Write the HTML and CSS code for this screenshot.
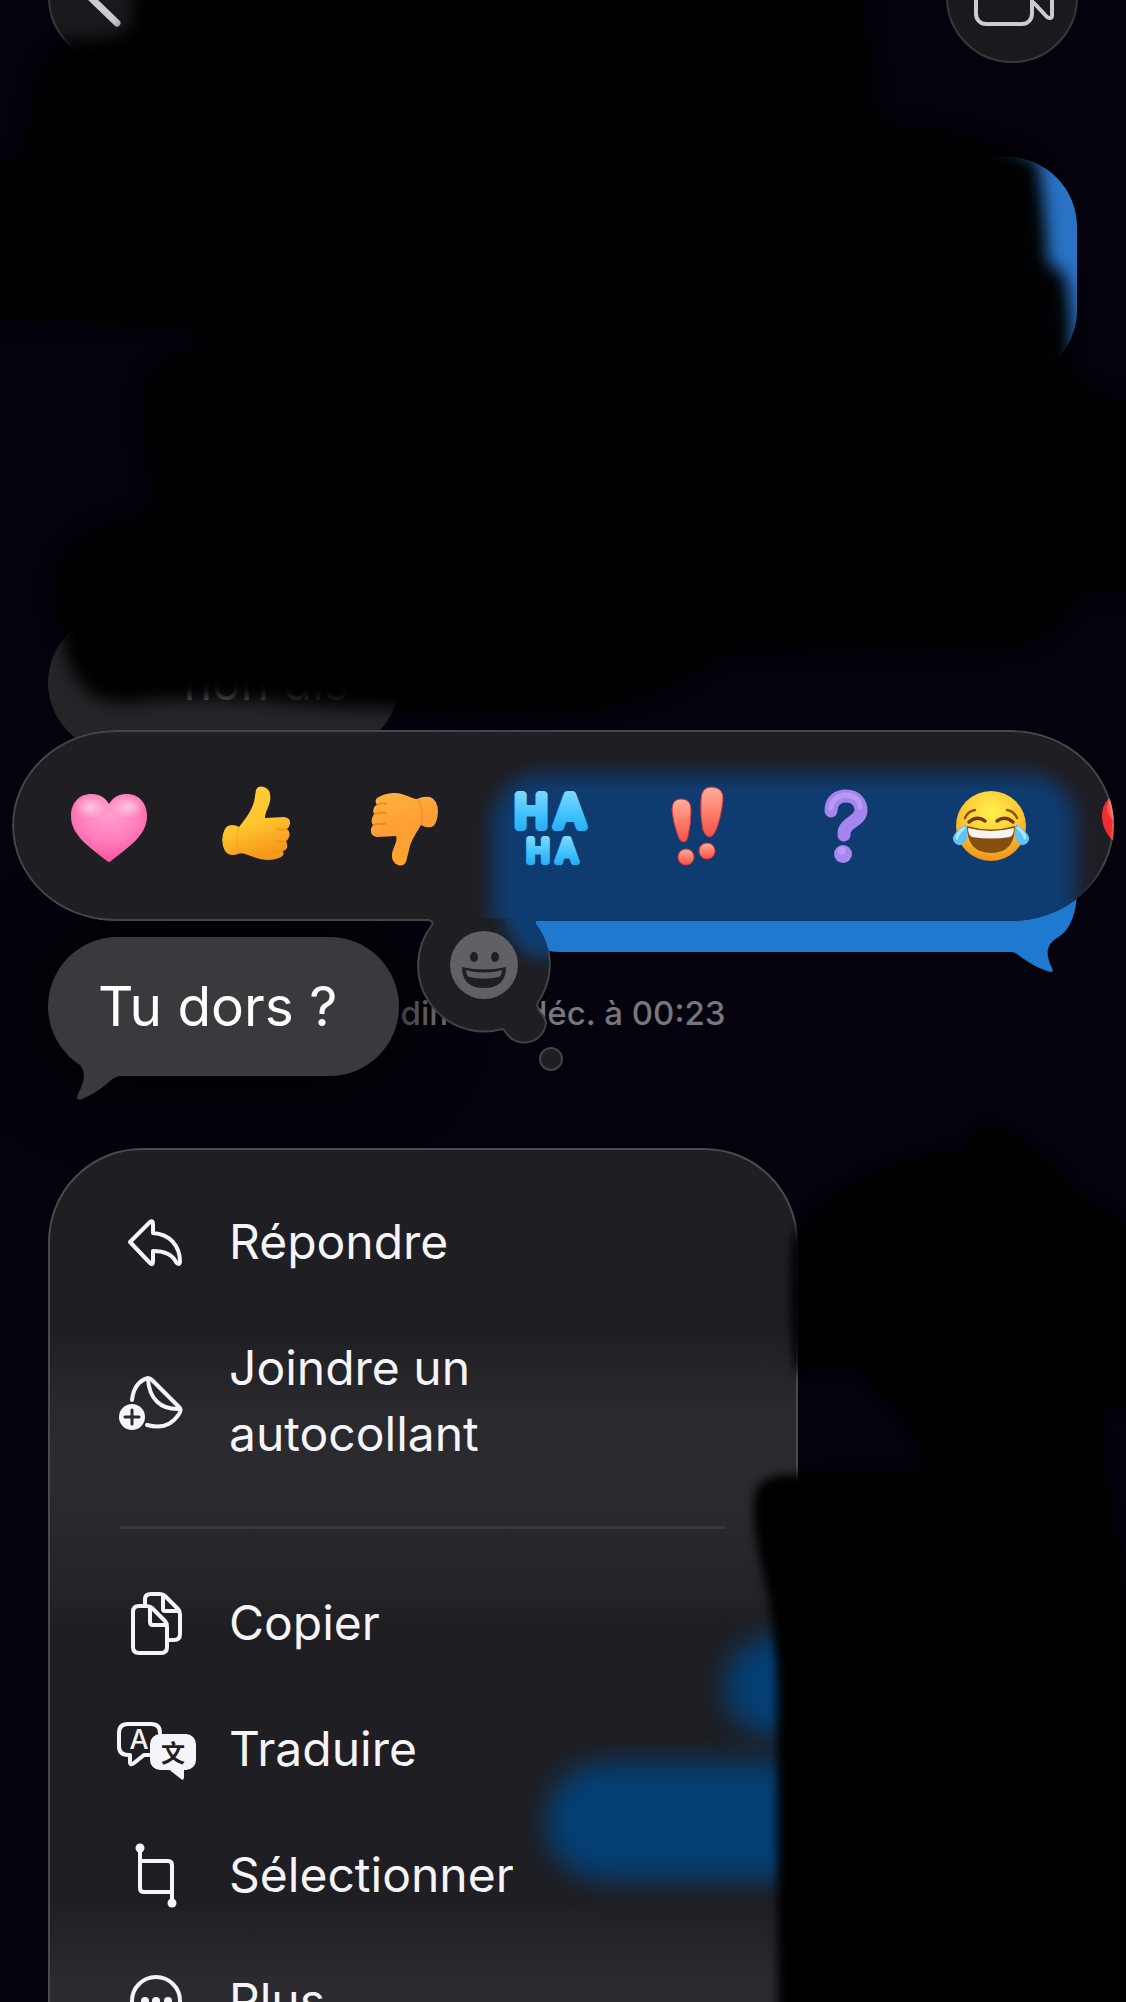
FILE: index.html
```
<!DOCTYPE html>
<html lang="fr">
<head>
  <meta charset="UTF-8">
  <meta name="viewport" content="width=device-width, initial-scale=1">
  <title>Messages</title>
  <link rel="stylesheet" href="styles.css">
</head>
<body>
<div class="screen">

  <!-- conversation -->
  <main class="thread">
    <header class="topbar">
      <button class="round-btn" aria-label="Retour">
        <svg viewBox="0 0 132 132"><path d="M78 30 L42 66 L69 92" stroke-width="7"/></svg>
      </button>
      <button class="round-btn" aria-label="Appel vidéo">
        <svg viewBox="0 0 132 132">
          <rect x="30" y="48" width="56" height="45" rx="10" stroke-width="4"/>
          <path d="M87 65 L101 53 Q106 50 106 56 V84 Q106 89 101 86 L88 72" stroke-width="4"/>
        </svg>
      </button>
    </header>

    <div class="msg sent old"></div>
    <div class="msg received dimmed">non dis</div>
    <div class="msg sent last">
      <svg class="tail" viewBox="0 0 70 83"><path d="M70 0 C69 25 62 39 50 46 C38 53 39 64 45 76 Q48 82 40 79 C28 75 18 68 10 62 Q8 60 4 60 L0 60 V0Z"/></svg>
    </div>
    <time class="stamp">dim. 28 déc. à 00:23</time>
  </main>

  <!-- menu contextuel -->
  <section class="overlay">
    <div class="reactions">
      <div class="pill">
        <div class="pill-glow"></div>
        <button aria-label="Cœur">
          <svg viewBox="0 0 76 80">
            <defs>
              <radialGradient id="pink" cx=".5" cy=".3" r=".75"><stop offset="0" stop-color="#ff9fd0"/><stop offset=".5" stop-color="#ff7fbd"/><stop offset="1" stop-color="#f94d9c"/></radialGradient>
              <radialGradient id="shine"><stop offset="0" stop-color="#ffc6e4"/><stop offset="1" stop-color="#ffc6e4" stop-opacity="0"/></radialGradient>
            </defs>
            <path fill="url(#pink)" d="M38 18 C33 10 27 8 20 8 C8 8 0 17 0 30 C0 50 20 62 36 75 Q38 77 40 75 C56 62 76 50 76 30 C76 17 68 8 56 8 C49 8 43 10 38 18Z"/>
            <ellipse cx="19" cy="21" rx="16" ry="12" fill="url(#shine)"/>
            <ellipse cx="57" cy="21" rx="16" ry="12" fill="url(#shine)"/>
          </svg>
        </button>
        <button aria-label="J’aime">
          <svg viewBox="0 0 76 80">
            <defs>
              <linearGradient id="yellow" x1="0" y1="0" x2=".3" y2="1"><stop offset="0" stop-color="#ffd23c"/><stop offset=".6" stop-color="#ffc42e"/><stop offset="1" stop-color="#f79a1c"/></linearGradient>
            </defs>
            <path fill="url(#yellow)" d="M38 4 Q40 -1 46 1 Q54 4 52 15 C51 21 47 26 47 32 L66 31 Q73 32 72 38 Q71 42 69 43 Q73 46 71 51 Q70 54 68 55 Q70 59 69 62 Q67 65 65 65 Q67 70 61 72 C50 76 40 73 30 69 Q24 66 20 68 Q11 71 7 65 Q2 55 6 45 Q8 39 14 39 Q18 39 21 41 C28 32 36 22 37 10Z"/>
            <path d="M58 43 Q65 44 69 43 M57 55 Q64 56 68 55 M56 65 Q61 66 65 65" fill="none" stroke="#e8961c" stroke-width="2" opacity=".7"/>
            <path d="M21 41 Q17 52 21 66" fill="none" stroke="#e8961c" stroke-width="2" opacity=".3"/>
          </svg>
        </button>
        <button aria-label="Je n’aime pas">
          <svg viewBox="0 0 76 80">
            <defs>
              <linearGradient id="orange" x1=".2" y1="0" x2=".5" y2="1"><stop offset="0" stop-color="#ffb340"/><stop offset=".5" stop-color="#ff9e36"/><stop offset="1" stop-color="#ffa52e"/></linearGradient>
            </defs>
            <path fill="url(#orange)" d="M12 12 Q20 7 30 7 C40 7 46 13 52 13 Q58 10 65 11 Q73 14 73 26 Q72 40 66 41 Q61 42 56 39 C52 46 46 54 44 64 Q42 72 41 76 Q38 81 33 79 Q26 76 27 68 C28 61 33 56 31 50 L12 51 Q5 50 6 43 Q7 40 8 39 Q5 35 8 30 L9 28 Q7 24 10 20 L12 19 Q9 15 12 12Z"/>
            <path d="M8 39 Q15 37 21 38 M9 28 Q16 26 22 27 M12 19 Q17 16 22 18" fill="none" stroke="#e87a1c" stroke-width="2" opacity=".7"/>
            <path d="M56 39 Q60 27 53 13" fill="none" stroke="#e87a1c" stroke-width="2" opacity=".4"/>
          </svg>
        </button>
        <button aria-label="Haha">
          <svg viewBox="0 0 76 80" class="haha">
            <defs>
              <linearGradient id="cyan" x1="0" y1="0" x2="0" y2="1"><stop offset="0" stop-color="#8fe0ff"/><stop offset=".6" stop-color="#3cc0fd"/><stop offset="1" stop-color="#1ba5f5"/></linearGradient>
            </defs>
            <text x="19 58" y="41" font-size="44" stroke-width="8">HA</text>
            <text x="26 55" y="76" font-size="31" stroke-width="6">HA</text>
          </svg>
        </button>
        <button aria-label="Exclamation">
          <svg viewBox="0 0 76 80">
            <defs>
              <linearGradient id="coral" x1="0" y1="0" x2="0" y2="1"><stop offset="0" stop-color="#ffb09c"/><stop offset=".5" stop-color="#ff7f6c"/><stop offset="1" stop-color="#f4504c"/></linearGradient>
            </defs>
            <g fill="url(#coral)" stroke="#dc3440" stroke-width="1">
              <path d="M13 24 Q13 13 22 13 Q32 13 32 24 Q32 38 29 50 Q28 56 25 56 Q21 56 19 50 Q14 36 13 24Z"/>
              <path d="M42 14 Q42 1 53 1 Q65 2 64 14 Q62 32 57 44 Q54 51 50 51 Q46 50 44 44 Q41 30 42 14Z"/>
              <circle cx="27" cy="71" r="8"/>
              <circle cx="48" cy="65" r="8"/>
            </g>
          </svg>
        </button>
        <button aria-label="Question">
          <svg viewBox="0 0 76 80">
            <path d="M25 25 C25 14 32 10 40 10 C50 10 55 17 55 24 C55 36 37 36 38 49" fill="none" stroke="#a584ee" stroke-width="13" stroke-linecap="round"/>
            <path d="M25 22 C26 13 33 9 40 9 C48 9 54 14 54 21" fill="none" stroke="#c4aafc" stroke-width="5" stroke-linecap="round" opacity=".6"/>
            <circle cx="37" cy="68" r="9" fill="#a987f2"/>
            <circle cx="36" cy="65" r="4" fill="#c4aafc" opacity=".6"/>
          </svg>
        </button>
        <button aria-label="Mort de rire">
          <svg viewBox="0 0 76 80">
            <defs>
              <radialGradient id="face" cx=".5" cy=".3" r=".7"><stop offset="0" stop-color="#fff04f"/><stop offset=".55" stop-color="#ffcb34"/><stop offset="1" stop-color="#ee931c"/></radialGradient>
            </defs>
            <circle cx="38" cy="40" r="35" fill="url(#face)"/>
            <path d="M12 32 Q15 25 22 24 M54 24 Q61 25 64 32" fill="none" stroke="#8a5210" stroke-width="2.5" stroke-linecap="round"/>
            <path d="M16 36 Q24 29 32 35 M44 35 Q52 29 60 36" fill="none" stroke="#6f3d0c" stroke-width="3.5" stroke-linecap="round"/>
            <path d="M14 40 Q38 47 62 40 Q62 67 38 67 Q14 67 14 40Z" fill="#85500f"/>
            <path d="M15 42 Q38 48 61 42 Q61 49 57 51 Q38 54 19 51 Q15 49 15 42Z" fill="#f4f4f4"/>
            <path d="M13 38 Q16 50 12 56 Q8 61 3 58 Q-2 54 1 49 Q4 44 13 38Z M63 38 Q60 50 64 56 Q68 61 73 58 Q78 54 75 49 Q72 44 63 38Z" fill="#5ec4f6"/>
            <path d="M11 42 Q4 48 4 52 M65 42 Q72 48 72 52" fill="none" stroke="#aee6ff" stroke-width="3" stroke-linecap="round"/>
          </svg>
        </button>
        <button aria-label="Cœur rouge">
          <svg viewBox="0 0 76 80">
            <path fill="#ee2f33" d="M40 18 C35 10 29 8 22 8 C10 8 2 17 2 30 C2 50 20 62 38 77 C56 62 76 50 76 30 C76 17 68 8 56 8 C49 8 43 10 40 18Z"/>
            <ellipse cx="16" cy="22" rx="9" ry="12" fill="#ff7a70" opacity=".6"/>
          </svg>
        </button>
      </div>

      <button class="thought" aria-label="Plus d’emojis">
        <svg viewBox="0 0 160 160">
          <defs>
            <clipPath id="cloud"><path d="M14 3 Q24 5 22 9 A66 66 0 0 0 92 114 Q95 115 96 118 A22 22 0 0 0 136 108 Q135 102 130 97 Q126 92 128 87 A66 66 0 0 0 126 9 Q124 5 134 3Z"/></clipPath>
            <filter id="soft" x="-50%" y="-50%" width="200%" height="200%"><feGaussianBlur stdDeviation="8"/></filter>
          </defs>
          <g clip-path="url(#cloud)">
            <rect width="160" height="160" fill="#1f1e23"/>
            <path d="M87 -40 H190 V42 H124 Q92 34 87 -40Z" fill="#0f3c70" filter="url(#soft)"/>
          </g>
          <path class="rim" d="M18 5 Q24 6 22 10 A66 66 0 0 0 92 114 Q95 115 96 118 A22 22 0 0 0 136 108 Q135 102 130 97 Q126 92 128 87 A66 66 0 0 0 138 34"/>
          <circle cx="141" cy="144" r="11" fill="#1f1e23" class="rim"/>
          <circle cx="74" cy="50" r="34" fill="#616064"/>
          <ellipse cx="64" cy="42" rx="4" ry="5" fill="#1f1e23"/>
          <ellipse cx="85" cy="42" rx="4" ry="5" fill="#1f1e23"/>
          <path d="M52 52 Q74 57 96 52 Q96 73 74 73 Q52 73 52 52Z" fill="#1f1e23"/>
          <path d="M56 55 Q74 60 92 55 Q92 60 89 62 Q74 65 59 62 Q56 60 56 55Z" fill="#616064"/>
        </svg>
      </button>
    </div>

    <div class="msg received focused">
      Tu dors ?
      <svg class="tail" viewBox="0 0 60 52"><path d="M0 6 C16 14 21 24 10 44 Q7 51 14 49 C26 44 34 38 42 31 Q47 26 54 26 L60 0Z"/></svg>
    </div>

    <nav class="menu">
      <div class="glow glow-small"></div>
      <div class="glow glow-wide"></div>
      <ul>
        <li><button>
          <svg viewBox="0 0 80 66"><path d="M13 33 L33 13 Q36 11 36 15 V24 C53 25 63 37 63 53 Q62 57 59 53 C55 45 48 42 36 42 V52 Q36 57 33 54Z"/></svg>
          <span>Répondre</span>
        </button></li>
        <li><button>
          <svg viewBox="0 0 80 66">
            <path d="M15 32 Q17 14 31 10 Q33 10 35 12 L62 39 Q65 42 62 46 Q51 63 30 57"/>
            <path d="M31 11 C32 30 43 42 63 41"/>
            <circle cx="15" cy="49" r="13" class="solid"/>
            <path d="M15 42 V56 M8 49 H22" class="cut"/>
          </svg>
          <span>Joindre un autocollant</span>
        </button></li>
        <li class="sep" role="separator"></li>
        <li><button>
          <svg viewBox="0 0 80 66">
            <path d="M28 15 V9 Q28 4 34 4 H43 Q46 4 48 6 L61 19 Q63 21 63 24 V44 Q63 50 57 50 H52"/>
            <path d="M46 5 V19 Q46 21 48 21 H62"/>
            <path d="M22 16 H29 Q33 16 35 18 L48 31 Q50 33 50 37 V57 Q50 63 44 63 H22 Q16 63 16 57 V22 Q16 16 22 16Z"/>
            <path d="M33 17 V32 Q33 35 36 35 H49"/>
          </svg>
          <span>Copier</span>
        </button></li>
        <li><button>
          <svg viewBox="0 0 80 66">
            <path d="M32 39 H27 L17 47 Q13 50 13 46 V39 H11 Q2 39 2 30 V17 Q2 8 11 8 H34 Q43 8 43 17"/>
            <rect x="33" y="18" width="46" height="36" rx="10" class="solid"/>
            <path d="M50 52 L64 63 Q67 65 67 61 V52Z" class="solid"/>
            <text x="22" y="33" font-size="27" class="ltr">A</text>
            <text x="56" y="46" font-size="24" class="han">文</text>
          </svg>
          <span>Traduire</span>
        </button></li>
        <li><button>
          <svg viewBox="0 0 80 66">
            <path d="M23 6 V46 Q23 50 27 50 H55 M23 19 H51 Q55 19 55 23 V62"/>
            <circle cx="23" cy="6" r="4.5" class="solid"/>
            <circle cx="55" cy="61" r="4.5" class="solid"/>
          </svg>
          <span>Sélectionner</span>
        </button></li>
        <li><button>
          <svg viewBox="0 0 80 66">
            <circle cx="39" cy="33" r="24"/>
            <g class="solid"><circle cx="28" cy="33" r="4"/><circle cx="39" cy="33" r="4"/><circle cx="51" cy="33" r="4"/></g>
          </svg>
          <span>Plus…</span>
        </button></li>
      </ul>
    </nav>
  </section>

  <!-- zones masquées au marqueur -->
  <svg class="marker" viewBox="0 0 1126 2002" preserveAspectRatio="none" aria-hidden="true">
    <defs>
      <filter id="edge" x="-5%" y="-5%" width="110%" height="110%"><feGaussianBlur stdDeviation="8"/></filter>
      <filter id="edge2" x="-5%" y="-5%" width="110%" height="110%"><feGaussianBlur stdDeviation="5"/></filter>
    </defs>
    <path filter="url(#edge)" d="M136 -30 L130 30 Q100 42 68 38 Q30 50 25 155 L-30 160 V320 L190 327 L200 347 Q150 350 143 390 Q140 440 152 500 L140 517 Q70 520 55 570 Q50 600 62 635 Q66 680 100 700 Q125 706 150 700 Q230 696 300 704 Q350 708 390 708 Q450 718 560 714 Q660 706 720 655 L1000 648 Q1060 645 1075 595 L1160 590 V405 Q1100 400 1070 375 Q1074 320 1066 280 Q1060 266 1048 264 Q1046 210 1038 160 Q960 125 880 122 Q870 60 860 -30Z"/>
    <path filter="url(#edge2)" d="M793 1240 Q800 1210 860 1178 Q920 1150 960 1152 Q975 1125 990 1126 Q1030 1135 1080 1195 L1160 1240 V1405 L1102 1410 Q1104 1480 1122 1560 L1160 2040 H778 L777 1680 Q774 1610 760 1560 Q750 1510 756 1490 Q762 1474 800 1474 L925 1468 Q915 1420 850 1366 L798 1374 Q788 1350 792 1240Z"/>
  </svg>
</div>
</body>
</html>
```
FILE: styles.css
```
* {
  box-sizing: border-box;
}

body {
  margin: 0;
  background: #04020d;
  color: #f5f4f8;
  font-family: Inter, "Liberation Sans", "Noto Sans CJK SC", sans-serif;
}

button {
  padding: 0;
  border: none;
  background: none;
  color: inherit;
  font: inherit;
  cursor: pointer;
}

svg {
  display: block;
  flex: none;
}

/* thread and overlay share one cell */
.screen {
  position: relative;
  display: grid;
  height: 100vh;
  overflow: hidden;
}

.thread,
.overlay {
  grid-area: 1 / 1;
  display: flex;
  flex-direction: column;
  min-width: 0;
}

/* top bar */
.topbar {
  display: flex;
  justify-content: space-between;
  margin-top: -69px;
  padding: 0 48px;
}

.round-btn {
  width: 132px;
  height: 132px;
  border: 2px solid #38373c;
  border-radius: 50%;
  background: #1a191e;
}

.round-btn svg {
  width: 132px;
  height: 132px;
  margin: -2px;
  fill: none;
  stroke: #cccbd0;
  stroke-linecap: round;
  stroke-linejoin: round;
}

/* bubbles */
.msg {
  position: relative;
  border-radius: 70px;
}

.sent {
  align-self: flex-end;
  margin-right: 49px;
  background: #1f79cf;
}

.received {
  align-self: flex-start;
  min-width: 351px;
  margin-left: 48px;
  padding: 0 50px;
  line-height: 139px;
}

.old {
  width: 66%;
  height: 223px;
  margin-top: 94px;
  background: #2a72c4;
}

.dimmed {
  margin-top: 233px;
  background: #252429;
  color: #77767b;
  font-size: 48px;
  text-align: right;
}

.last {
  width: 52%;
  height: 180px;
  margin-top: 20px;
}

.last .tail {
  position: absolute;
  right: 0;
  bottom: -23px;
  width: 70px;
  height: 83px;
  fill: #1f79cf;
}

.stamp {
  align-self: center;
  margin-top: 42px;
  color: #77767c;
  font-size: 33px;
  font-weight: 500;
  line-height: 38px;
}

/* reactions */
.overlay {
  padding-top: 730px;
}

.reactions {
  position: relative;
  margin: 0 12px;
  z-index: 1;
}

.pill {
  position: relative;
  display: flex;
  align-items: center;
  gap: 71px;
  height: 191px;
  padding-left: 59px;
  border-radius: 104px / 96px;
  background: #1f1e23;
  overflow: hidden;
}

/* rim light, faded out over the blue */
.pill::after {
  content: "";
  position: absolute;
  inset: 0;
  border: 2px solid rgba(255, 255, 255, 0.18);
  border-radius: inherit;
  mask: linear-gradient(#000, #000) left / 45% 100% no-repeat, linear-gradient(#000 80%, transparent) right top / 55% 88% no-repeat;
  pointer-events: none;
}

.pill button {
  position: relative;
  flex: none;
}

.pill button svg {
  width: 76px;
  height: 80px;
}

.pill-glow {
  position: absolute;
  top: 44px;
  right: 38px;
  bottom: -40px;
  width: 53%;
  border-radius: 50px;
  background: #0f3c70;
  filter: blur(10px);
}

.haha text {
  fill: url(#cyan);
  stroke: url(#cyan);
  stroke-linejoin: round;
  font-weight: 400;
  text-anchor: middle;
}

.thought {
  position: absolute;
  top: 185px;
  left: 398px;
}

.thought svg {
  width: 160px;
  height: 160px;
}

.rim {
  stroke: #434247;
  stroke-width: 2;
}

path.rim {
  fill: none;
}

.focused {
  margin-top: 16px;
  background: #3a393e;
  box-shadow: 0 0 70px 10px #000;
  color: #fff;
  font-size: 55px;
}

.focused .tail {
  position: absolute;
  left: 20px;
  bottom: -26px;
  width: 60px;
  height: 52px;
  fill: #3a393e;
}

/* context menu */
.menu {
  position: relative;
  width: 750px;
  margin: 72px 0 0 48px;
  padding: 29px 0;
  border: 2px solid #4a494e;
  border-radius: 94px;
  background: linear-gradient(#1f1e23 180px, #2a292e 260px, #2b2a2f 340px, #242328 440px, #1f1e22 480px, #1f1e22 750px, #2b2a2f 830px);
  overflow: hidden;
}

.menu ul {
  position: relative;
  margin: 0;
  padding: 0 67px;
  list-style: none;
}

.menu button {
  display: flex;
  align-items: center;
  gap: 32px;
  width: 450px;
  padding: 30px 0;
  font-size: 48px;
  line-height: 66px;
  text-align: left;
}

.menu svg {
  width: 80px;
  height: 66px;
  fill: none;
  stroke: #f5f4f8;
  stroke-width: 4;
  stroke-linecap: round;
  stroke-linejoin: round;
}

.menu .solid {
  fill: #f5f4f8;
  stroke: none;
}

.menu .cut {
  stroke: #2a292e;
  stroke-width: 3;
}

.menu text {
  stroke: none;
  text-anchor: middle;
}

.ltr {
  fill: #f5f4f8;
  font-weight: 500;
}

.han {
  fill: #1f1e23;
  font-family: "Noto Sans CJK SC", sans-serif;
  font-weight: 700;
}

.sep {
  height: 3px;
  margin: 29px 3px 31px;
  background: #38373c;
}

.glow {
  position: absolute;
  background: #043f74;
  filter: blur(14px);
}

.glow-small {
  top: 486px;
  right: -60px;
  width: 132px;
  height: 100px;
  border-radius: 50px;
}

.glow-wide {
  top: 612px;
  right: -60px;
  width: 310px;
  height: 118px;
  border-radius: 58px;
}

/* marker strokes */
.marker {
  position: absolute;
  inset: 0;
  width: 100%;
  height: 100%;
  z-index: 2;
  opacity: 0.99;
  pointer-events: none;
}
```
